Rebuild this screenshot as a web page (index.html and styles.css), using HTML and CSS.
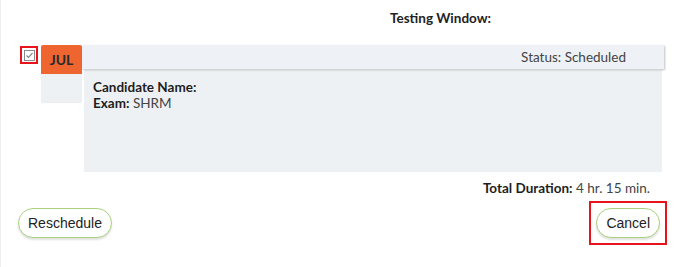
FILE: index.html
```html
<!DOCTYPE html>
<html lang="en">
<head>
    <meta charset="UTF-8">
    <meta name="viewport" content="width=device-width, initial-scale=1.0">
    <title>Appointment</title>
    <link rel="stylesheet" href="styles.css">
</head>
<body>
    <div class="page">
        <div class="window-title">Testing Window:</div>

        <div class="appointment">
            <div class="select-col">
                <span class="check-frame">
                    <svg class="check-icon" width="11" height="11" viewBox="0 0 11 11">
                        <rect x="0.5" y="0.5" width="10" height="10" fill="none" stroke="#8a8a8a" stroke-width="1"/>
                        <path d="M2.5 5.5 L4.5 7.5 L8.5 3" fill="none" stroke="#8a8a8a" stroke-width="1.2"/>
                    </svg>
                </span>
            </div>
            <div class="date-col">
                <div class="month">JUL</div>
                <div class="day"></div>
            </div>
            <div class="card">
                <div class="card-header">Status: Scheduled</div>
                <div class="card-body">
                    <p><strong>Candidate Name:</strong></p>
                    <p><strong>Exam:</strong> SHRM</p>
                </div>
            </div>
        </div>

        <div class="duration"><strong>Total Duration:</strong> 4 hr. 15 min.</div>

        <div class="actions">
            <button class="pill">Reschedule</button>
            <span class="highlight">
                <button class="pill">Cancel</button>
            </span>
        </div>
    </div>
</body>
</html>
```

FILE: styles.css
```css
body {
    margin: 0;
    font-family: Lato, "Open Sans", sans-serif;
    font-size: 13.5px;
    color: #333;
    background: #fff;
}

.page {
    height: 267px;
    border-left: 1px solid #eeeeee;
    box-sizing: border-box;
}

.window-title {
    padding: 10px 0 0 389px;
    height: 45px;
    box-sizing: border-box;
    font-weight: bold;
    color: #222;
}

.appointment {
    display: flex;
    padding-left: 19px;
    width: 644px;
}

.select-col {
    width: 21px;
}

.check-frame {
    display: flex;
    align-items: center;
    justify-content: center;
    width: 14px;
    height: 14px;
    margin-top: 1px;
    border: 2px solid #e8141c;
}

.date-col {
    width: 41px;
    display: flex;
    flex-direction: column;
}

.month {
    height: 29px;
    background: #ef6530;
    border-radius: 2px 2px 0 0;
    display: flex;
    align-items: center;
    justify-content: center;
    font-weight: bold;
    font-size: 14px;
    color: #2a2a2a;
}

.day {
    height: 28px;
    background: #eef1f4;
    border-radius: 0 0 2px 2px;
    box-shadow: 0 1px 1px rgba(0, 0, 0, 0.08);
}

.card {
    flex: 1;
    display: flex;
    flex-direction: column;
}

.card-header {
    height: 24px;
    background: #eef1f5;
    box-shadow: 1px 1px 2px rgba(0, 0, 0, 0.25);
    text-align: right;
    padding-right: 38px;
    line-height: 25px;
    color: #444;
    position: relative;
}

.card-body {
    margin: 1px 2px 0 2px;
    height: 102px;
    background: #eef1f4;
    padding: 9px 9px;
    box-sizing: border-box;
}

.card-body p {
    margin: 0;
    line-height: 16px;
    color: #444;
}

.card-body strong {
    color: #1e1e1e;
}

.duration {
    text-align: right;
    padding-right: 38px;
    margin-top: 8px;
    line-height: 16px;
    color: #444;
}

.duration strong {
    color: #1e1e1e;
}

.actions {
    display: flex;
    justify-content: space-between;
    align-items: center;
    padding: 5px 21px 0 17px;
}

.pill {
    font-family: "Liberation Sans", Arial, sans-serif;
    font-size: 14px;
    color: #222;
    background: #fff;
    border: 1.5px solid #a9d27d;
    border-radius: 16px;
    height: 30px;
    padding: 0 9px;
    box-shadow: 0 2px 2px rgba(0, 0, 0, 0.12);
    cursor: pointer;
}

.highlight {
    border: 2px solid #e8141c;
    padding: 5px 5px;
    display: flex;
}
```
